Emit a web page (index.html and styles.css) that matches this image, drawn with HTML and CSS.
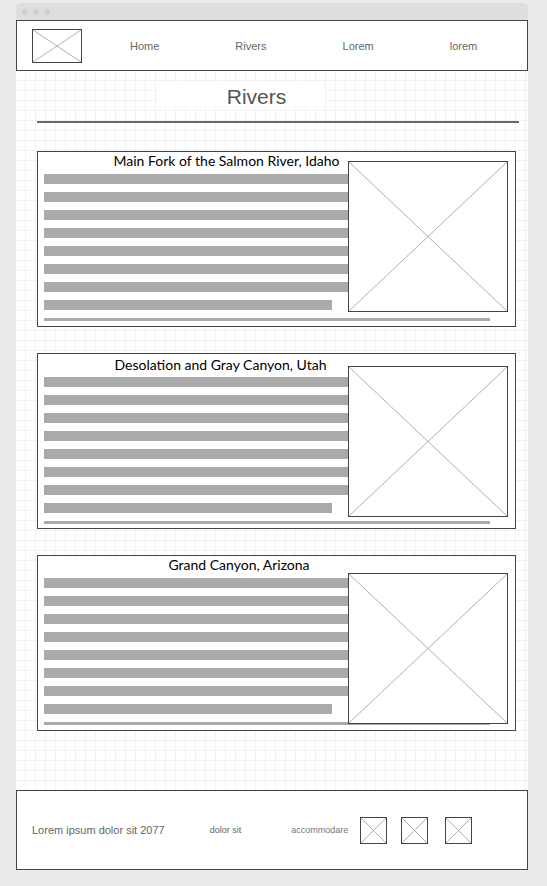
FILE: index.html
```html
<!DOCTYPE html>
<html lang="en">
<head>
    <meta charset="UTF-8">
    <meta name="viewport" content="width=device-width, initial-scale=1.0">
    <title>Rivers</title>
    <link rel="stylesheet" href="styles.css">
</head>
<body>
<div class="window">
    <div class="titlebar">
        <span class="dot"></span>
        <span class="dot"></span>
        <span class="dot"></span>
    </div>

    <header class="site-header">
        <div class="placeholder logo">
            <svg viewBox="0 0 100 100" preserveAspectRatio="none"><line x1="0" y1="0" x2="100" y2="100"/><line x1="100" y1="0" x2="0" y2="100"/></svg>
        </div>
        <nav class="nav">
            <a href="#">Home</a>
            <a href="#">Rivers</a>
            <a href="#">Lorem</a>
            <a href="#">lorem</a>
        </nav>
    </header>

    <main class="content">
        <div class="page-title"><h1>Rivers</h1></div>
        <div class="rule"></div>

        <div class="river-list">
            <section class="river-card card-salmon">
                <h2 class="river-title">Main Fork of the Salmon River, Idaho</h2>
                <div class="lines">
                    <span class="line"></span>
                    <span class="line"></span>
                    <span class="line"></span>
                    <span class="line"></span>
                    <span class="line"></span>
                    <span class="line"></span>
                    <span class="line"></span>
                    <span class="line short"></span>
                </div>
                <span class="line-thin"></span>
                <div class="placeholder river-image">
                    <svg viewBox="0 0 100 100" preserveAspectRatio="none"><line x1="0" y1="0" x2="100" y2="100"/><line x1="100" y1="0" x2="0" y2="100"/></svg>
                </div>
            </section>

            <section class="river-card card-desolation">
                <h2 class="river-title">Desolation and Gray Canyon, Utah</h2>
                <div class="lines">
                    <span class="line"></span>
                    <span class="line"></span>
                    <span class="line"></span>
                    <span class="line"></span>
                    <span class="line"></span>
                    <span class="line"></span>
                    <span class="line"></span>
                    <span class="line short"></span>
                </div>
                <span class="line-thin"></span>
                <div class="placeholder river-image">
                    <svg viewBox="0 0 100 100" preserveAspectRatio="none"><line x1="0" y1="0" x2="100" y2="100"/><line x1="100" y1="0" x2="0" y2="100"/></svg>
                </div>
            </section>

            <section class="river-card card-grand">
                <h2 class="river-title">Grand Canyon, Arizona</h2>
                <div class="lines">
                    <span class="line"></span>
                    <span class="line"></span>
                    <span class="line"></span>
                    <span class="line"></span>
                    <span class="line"></span>
                    <span class="line"></span>
                    <span class="line"></span>
                    <span class="line short"></span>
                </div>
                <span class="line-thin"></span>
                <div class="placeholder river-image">
                    <svg viewBox="0 0 100 100" preserveAspectRatio="none"><line x1="0" y1="0" x2="100" y2="100"/><line x1="100" y1="0" x2="0" y2="100"/></svg>
                </div>
            </section>
        </div>
    </main>

    <footer class="site-footer">
        <span class="footer-copy">Lorem ipsum dolor sit 2077</span>
        <span class="footer-link first">dolor sit</span>
        <span class="footer-link second">accommodare</span>
        <div class="placeholder social">
            <svg viewBox="0 0 100 100" preserveAspectRatio="none"><line x1="0" y1="0" x2="100" y2="100"/><line x1="100" y1="0" x2="0" y2="100"/></svg>
        </div>
        <div class="placeholder social">
            <svg viewBox="0 0 100 100" preserveAspectRatio="none"><line x1="0" y1="0" x2="100" y2="100"/><line x1="100" y1="0" x2="0" y2="100"/></svg>
        </div>
        <div class="placeholder social">
            <svg viewBox="0 0 100 100" preserveAspectRatio="none"><line x1="0" y1="0" x2="100" y2="100"/><line x1="100" y1="0" x2="0" y2="100"/></svg>
        </div>
    </footer>
</div>
</body>
</html>
```

FILE: styles.css
```css
/* Global Styles */
body {
    margin: 0;
    padding: 3px 0 0;
    background-color: #ebebeb;
    font-family: 'Liberation Sans', Arial, sans-serif;
}

.window {
    width: 512px;
    margin-left: 16px;
}

.titlebar {
    height: 17px;
    background-color: #dedede;
    border-radius: 4px 4px 0 0;
    display: flex;
    align-items: center;
    gap: 5px;
    padding-left: 6px;
}

.dot {
    width: 6px;
    height: 6px;
    border-radius: 50%;
    background-color: #d0d0d0;
}

/* Placeholder boxes (image with a cross) */
.placeholder {
    box-sizing: border-box;
    border: 1px solid #444;
    background-color: white;
}

.placeholder svg {
    display: block;
    width: 100%;
    height: 100%;
}

.placeholder line {
    stroke: #b0b0b0;
    stroke-width: 1;
    vector-effect: non-scaling-stroke;
}

/* Header */
.site-header {
    box-sizing: border-box;
    height: 51px;
    border: 1px solid #444;
    background-color: white;
    display: flex;
    align-items: center;
    padding-left: 15px;
}

.logo {
    width: 50px;
    height: 34px;
}

.nav {
    display: flex;
    gap: 76px;
    margin-left: 48px;
}

.nav a {
    font-size: 11px;
    color: #666;
    text-decoration: none;
}

/* Content */
.content {
    display: block;
    padding: 12px 0 59px;
    background-color: white;
    background-image:
        linear-gradient(to right, transparent 9px, #f2f2f2 9px, #f2f2f2 10px),
        linear-gradient(to bottom, transparent 9px, #f2f2f2 9px, #f2f2f2 10px);
    background-size: 10px 10px;
}

.page-title {
    box-sizing: border-box;
    width: 168px;
    height: 24px;
    margin-left: 141px;
    padding: 2px 0 0 31px;
    background-color: white;
    text-align: center;
}

.page-title h1 {
    margin: 0;
    font-size: 21px;
    line-height: 24px;
    font-weight: normal;
    color: #555;
}

.rule {
    width: 482px;
    height: 2px;
    margin: 14px 0 0 21px;
    background-color: #666;
}

.river-list {
    display: flex;
    flex-direction: column;
    gap: 26px;
    margin: 28px 0 0 21px;
}

.river-card {
    position: relative;
    box-sizing: border-box;
    width: 479px;
    height: 176px;
    padding: 0 7px 5px 6px;
    border: 1px solid #444;
    background-color: white;
}

.river-title {
    box-sizing: border-box;
    width: 304px;
    margin: 0;
    font-family: Lato, 'Open Sans', sans-serif;
    font-size: 14px;
    line-height: 18px;
    font-weight: normal;
    color: #000;
    text-align: center;
    white-space: nowrap;
}

.card-salmon .river-title { padding-left: 61px; }
.card-desolation .river-title { padding: 2px 0 0 49px; }
.card-grand .river-title { padding-left: 86px; }

.lines {
    display: flex;
    flex-direction: column;
    gap: 8px;
    margin-top: 4px;
}

.card-desolation .lines { margin-top: 3px; }

.line {
    display: block;
    width: 304px;
    height: 10px;
    background-color: #aaa;
}

.line.short {
    width: 288px;
}

.line-thin {
    display: block;
    width: 446px;
    height: 3px;
    margin-top: 8px;
    background-color: #aaa;
}

.river-image {
    position: absolute;
    top: 9px;
    right: 7px;
    width: 160px;
    height: 151px;
}

.card-desolation .river-image { top: 12px; }
.card-grand .river-image { top: 17px; }

/* Footer */
.site-footer {
    box-sizing: border-box;
    height: 80px;
    border: 1px solid #444;
    background-color: white;
    display: flex;
    align-items: center;
    padding-left: 15px;
}

.footer-copy {
    font-size: 11px;
    color: #666;
}

.footer-link {
    font-size: 9px;
    color: #666;
}

.footer-link.first {
    margin-left: 45px;
}

.footer-link.second {
    margin-left: 50px;
    color: #777;
}

.social {
    width: 27px;
    height: 27px;
}

.footer-link.second + .social {
    margin-left: 12px;
}

.social + .social {
    margin-left: 14px;
}

.social + .social + .social {
    margin-left: 17px;
}
```
